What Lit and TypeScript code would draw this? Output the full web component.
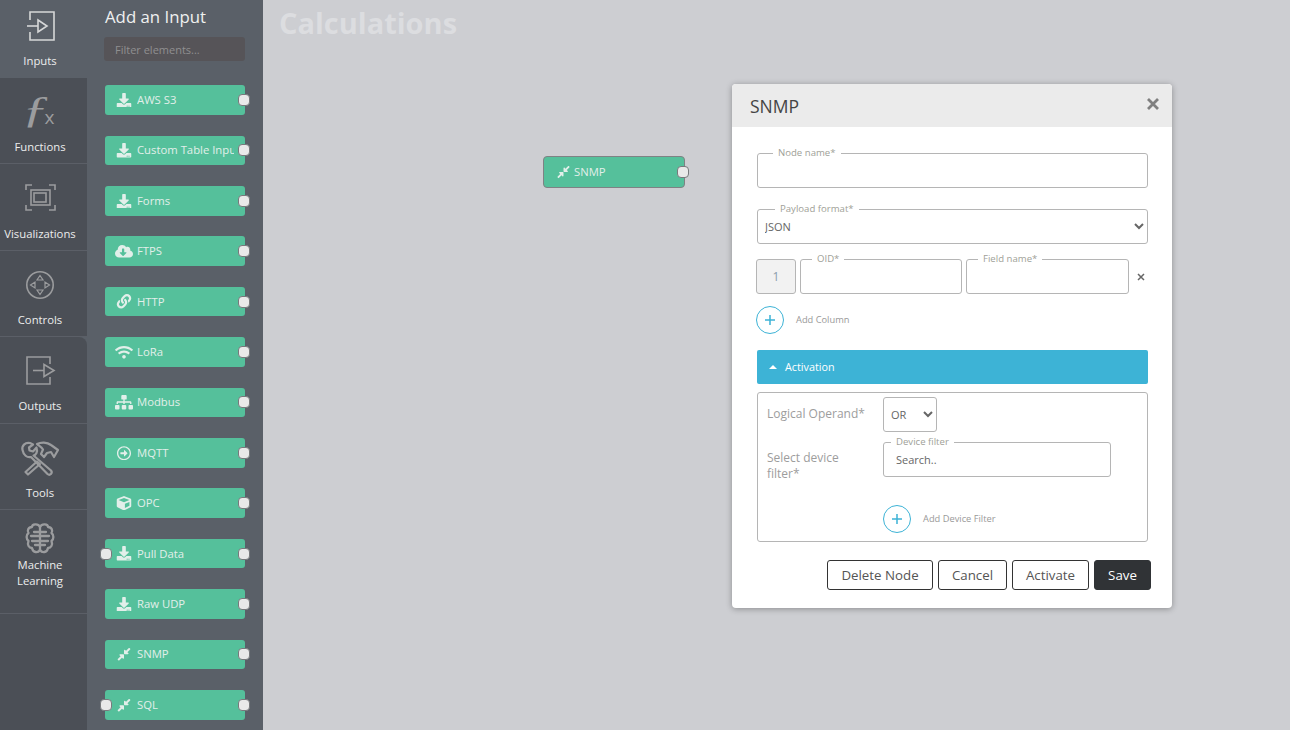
import { LitElement, html, css } from "lit";
import { customElement } from "lit/decorators.js";

const fa = (vb: string, d: string, cls = "fa") => html`<svg class=${cls} viewBox=${vb} fill="currentColor"><path d=${d}></path></svg>`;

const download = () => fa("0 0 512 512", "M216 0h80c13.3 0 24 10.7 24 24v168h87.7c17.8 0 26.7 21.5 14.1 34.1L269.7 378.3c-7.5 7.5-19.8 7.5-27.3 0L90.1 226.1c-12.6-12.6-3.7-34.1 14.1-34.1H192V24c0-13.3 10.7-24 24-24zm296 376v112c0 13.3-10.7 24-24 24H24c-13.3 0-24-10.7-24-24V376c0-13.3 10.7-24 24-24h146.7l49 49c20.1 20.1 52.5 20.1 72.6 0l49-49H488c13.3 0 24 10.7 24 24zm-124 88c0-11-9-20-20-20s-20 9-20 20 9 20 20 20 20-9 20-20zm64 0c0-11-9-20-20-20s-20 9-20 20 9 20 20 20 20-9 20-20z");
const cloud = () => fa("0 0 640 512", "M537.6 226.6c4.1-10.7 6.4-22.4 6.4-34.6 0-53-43-96-96-96-19.7 0-38.1 6-53.3 16.2C367 64.2 315.3 32 256 32c-88.4 0-160 71.6-160 160 0 2.7.1 5.4.2 8.1C40.2 219.8 0 273.2 0 336c0 79.5 64.5 144 144 144h368c70.7 0 128-57.3 128-128 0-61.9-44-113.6-102.4-125.4zm-132.9 88.7L299.3 420.7c-6.2 6.2-16.4 6.2-22.6 0L171.3 315.3c-10.1-10.1-2.9-27.3 11.3-27.3H248V176c0-8.8 7.2-16 16-16h48c8.8 0 16 7.2 16 16v112h65.4c14.2 0 21.4 17.2 11.3 27.3z");
const link = () => fa("0 0 512 512", "M326.612 185.391c59.747 59.809 58.927 155.698.36 214.59-.11.12-.24.25-.36.37l-67.2 67.2c-59.27 59.27-155.699 59.262-214.96 0-59.27-59.26-59.27-155.7 0-214.96l37.106-37.106c9.84-9.84 26.786-3.3 27.294 10.606.648 17.722 3.826 35.527 9.69 52.721 1.986 5.822.567 12.262-3.783 16.612l-13.087 13.087c-28.026 28.026-28.905 73.66-1.155 101.96 28.024 28.579 74.086 28.749 102.325.51l67.2-67.19c28.191-28.191 28.073-73.757 0-101.83-3.701-3.694-7.429-6.564-10.341-8.569a16.037 16.037 0 0 1-6.947-12.606c-.396-10.567 3.348-21.456 11.698-29.806l21.054-21.055c5.521-5.521 14.182-6.199 20.584-1.731a152.482 152.482 0 0 1 20.522 17.197zM467.547 44.449c-59.261-59.262-155.69-59.27-214.96 0l-67.2 67.2c-.12.12-.25.25-.36.37-58.566 58.892-59.387 154.781.36 214.59a152.454 152.454 0 0 0 20.521 17.196c6.402 4.468 15.064 3.789 20.584-1.731l21.054-21.055c8.35-8.35 12.094-19.239 11.698-29.806a16.037 16.037 0 0 0-6.947-12.606c-2.912-2.005-6.64-4.875-10.341-8.569-28.073-28.073-28.191-73.639 0-101.83l67.2-67.19c28.239-28.239 74.3-28.069 102.325.51 27.75 28.3 26.872 73.934-1.155 101.96l-13.087 13.087c-4.35 4.35-5.769 10.79-3.783 16.612 5.864 17.194 9.042 34.999 9.69 52.721.509 13.906 17.454 20.446 27.294 10.606l37.106-37.106c59.271-59.259 59.271-155.699.001-214.959z");
const wifi = () => fa("0 0 640 512", "M634.91 154.88C457.74-8.99 182.19-8.93 5.09 154.88c-6.66 6.16-6.79 16.59-.35 22.98l34.24 33.97c6.14 6.1 16.02 6.23 22.4.38 145.92-133.68 371.3-133.71 517.25 0 6.38 5.85 16.26 5.71 22.4-.38l34.24-33.97c6.43-6.39 6.3-16.82-.36-22.98zM320 352c-35.35 0-64 28.65-64 64s28.65 64 64 64 64-28.65 64-64-28.65-64-64-64zm202.67-83.59c-115.26-101.93-290.21-101.82-405.34 0-6.9 6.1-7.12 16.69-.57 23.15l34.44 33.99c6 5.92 15.66 6.32 22.05.8 83.95-72.57 209.74-72.41 293.49 0 6.39 5.52 16.05 5.13 22.05-.8l34.44-33.99c6.56-6.46 6.33-17.06-.56-23.15z");
const sitemap = () => fa("0 0 640 512", "M128 352H32c-17.67 0-32 14.33-32 32v96c0 17.67 14.33 32 32 32h96c17.67 0 32-14.33 32-32v-96c0-17.67-14.33-32-32-32zm-24-80h192v48h48v-48h192v48h48v-57.59c0-21.17-17.23-38.41-38.41-38.41H344v-64h40c17.67 0 32-14.33 32-32V32c0-17.67-14.33-32-32-32H256c-17.67 0-32 14.33-32 32v96c0 17.67 14.33 32 32 32h40v64H94.41C73.23 224 56 241.23 56 262.41V320h48v-48zm264 80h-96c-17.67 0-32 14.33-32 32v96c0 17.67 14.33 32 32 32h96c17.67 0 32-14.33 32-32v-96c0-17.67-14.33-32-32-32zm240 0h-96c-17.67 0-32 14.33-32 32v96c0 17.67 14.33 32 32 32h96c17.67 0 32-14.33 32-32v-96c0-17.67-14.33-32-32-32z");
const circleArrow = () => fa("0 0 512 512", "M504 256C504 119 393 8 256 8S8 119 8 256s111 248 248 248 248-111 248-248zm-448 0c0-110.5 89.5-200 200-200s200 89.5 200 200-89.5 200-200 200S56 366.5 56 256zm72 20v-40c0-6.6 5.4-12 12-12h116v-67c0-10.7 12.9-16 20.5-8.5l99 99c4.7 4.7 4.7 12.3 0 17l-99 99c-7.6 7.6-20.5 2.2-20.5-8.5v-67H140c-6.6 0-12-5.4-12-12z");
const cube = () => fa("0 0 512 512", "M239.1 6.3l-208 78c-18.7 7-31.1 25-31.1 45v225.1c0 18.2 10.3 34.8 26.5 42.9l208 104c13.5 6.8 29.4 6.8 42.9 0l208-104c16.3-8.1 26.5-24.8 26.5-42.9V129.3c0-20-12.4-37.9-31.1-44.9l-208-78C262 2.2 250 2.2 239.1 6.3zM256 68.4l192 72v1.1l-192 78-192-78v-1.1l192-72zm32 356V275.5l160-65v133.9l-160 80z");
const compress = () => fa("0 0 448 512", "M4.686 427.314L104 328l-32.922-31.029C55.958 281.851 66.666 256 88.048 256h112C213.303 256 224 266.745 224 280v112c0 21.382-25.803 32.09-40.922 16.971L152 376l-99.314 99.314c-6.248 6.248-16.379 6.248-22.627 0L4.686 449.941c-6.248-6.248-6.248-16.379 0-22.627zM443.314 84.686L344 184l32.922 31.029c15.12 15.12 4.412 40.971-16.97 40.971h-112C234.697 256 224 245.255 224 232V120c0-21.382 25.803-32.09 40.922-16.971L296 136l99.314-99.314c6.248-6.248 16.379-6.248 22.627 0l25.373 25.373c6.248 6.248 6.248 16.379 0 22.627z");

const palette = [
  { name: "AWS S3", icon: download },
  { name: "Custom Table Input", icon: download },
  { name: "Forms", icon: download },
  { name: "FTPS", icon: cloud },
  { name: "HTTP", icon: link },
  { name: "LoRa", icon: wifi },
  { name: "Modbus", icon: sitemap },
  { name: "MQTT", icon: circleArrow },
  { name: "OPC", icon: cube },
  { name: "Pull Data", icon: download, left: true },
  { name: "Raw UDP", icon: download },
  { name: "SNMP", icon: compress },
  { name: "SQL", icon: compress, left: true },
];

const navIcons = {
  inputs: html`<svg class="ni" viewBox="0 0 40 40" fill="none" stroke="currentColor" stroke-width="1.6"><path d="M10 14V6H34V34H10V26"></path><path d="M7 20H18"></path><path d="M18 14L27 20L18 26Z"></path></svg>`,
  functions: html`<svg class="ni" viewBox="0 0 40 40" fill="currentColor"><text x="-3" y="31" transform="translate(6 0) scale(1.45 1)" class="fx-f">ƒ</text><text x="24.500" y="32.500" class="fx-x">x</text></svg>`,
  vis: html`<svg class="ni" viewBox="0 0 40 40" fill="none" stroke="currentColor" stroke-width="1.6"><path d="M6 13V8H12M29 8H35V13M35 28V33H29M12 33H6V28"></path><rect x="11" y="13" width="19" height="15"></rect><rect x="14" y="16" width="12" height="9"></rect></svg>`,
  controls: html`<svg class="ni" viewBox="0 0 40 40" fill="none" stroke="currentColor" stroke-width="1.6"><circle cx="20" cy="21" r="13.2"></circle><path d="M20 11.5L23 16H17ZM20 30.5L23 26H17ZM10.5 21L15 18V24ZM29.5 21L25 18V24Z" stroke-width="1.2"></path></svg>`,
  outputs: html`<svg class="ni" viewBox="0 0 40 40" fill="none" stroke="currentColor" stroke-width="1.6"><path d="M30 14V7H7V34H30V27"></path><path d="M13 20.5H24"></path><path d="M24 14.5L34 20.5L24 26.5Z"></path></svg>`,
  tools: html`<svg class="ni" viewBox="0 0 40 40" fill="none" stroke="currentColor" stroke-width="2.2" stroke-linejoin="round"><path d="M2.5 13C1.5 9 5 5 10 6L13 7.5L9 10.5L9.5 13.5L13 14.5L16.5 10.5C18 15 16 18 13.500 18.500L31 33.500C33 36 30 39 27.500 37L11 20C7 21 3.500 18 2.500 13Z"></path><path d="M8 37.500L5.500 35L17 24.500L20 27Z"></path><path d="M17 7C21 5 27 5 31 8L38 13L34 20L31 15L27 16L24 20L21 17L23 12.500C21.500 10 19 9 17 7Z"></path></svg>`,
  ml: html`<svg class="ni" viewBox="0 0 40 40" fill="none" stroke="currentColor" stroke-width="2.3" stroke-linejoin="round" stroke-linecap="round"><path d="M20 10C18 6 12 7 12 10C8 10 7 14 8.500 16C6 18 6 22 8.500 24C7 28 9 31 12 31C13 36 18 36 20 33C22 36 27 36 28 31C31 31 33 28 31.500 24C34 22 34 18 31.500 16C33 14 32 10 28 10C28 7 22 6 20 10Z"></path><path d="M20 10V33"></path><path d="M20 15H14M11 19H20M20 19H29M26 15H20M20 24H12M28 24H20M15 28H20M25 28H20"></path></svg>`,
};

const nav = [
  { label: ["Inputs"], icon: navIcons.inputs, cls: "active" },
  { label: ["Functions"], icon: navIcons.functions, cls: "" },
  { label: ["Visualizations"], icon: navIcons.vis, cls: "" },
  { label: ["Controls"], icon: navIcons.controls, cls: "" },
  { label: ["Outputs"], icon: navIcons.outputs, cls: "round" },
  { label: ["Tools"], icon: navIcons.tools, cls: "" },
  { label: ["Machine", "Learning"], icon: navIcons.ml, cls: "ml" },
];

@customElement("app-root")
export class AppRoot extends LitElement {
  static styles = css`
    :host { display: flex; width: 1290px; height: 730px; overflow: hidden; font-family: "Open Sans", sans-serif; background: #cdced2; }
    * { box-sizing: border-box; }

    .rail { width: 87px; flex: none; display: flex; flex-direction: column; background: #5a6068; }
    .nav { height: 86.4px; padding: 13px 7px 0 0; display: flex; flex-direction: column; align-items: center; background: #4b4f56; border-bottom: 1px solid #5b5f67; color: #9b9c9e; }
    .nav.active { height: 78px; padding-top: 6px; background: #5a6068; color: #d6d7d8; border-bottom: 0; }
    .nav.round { border-top-right-radius: 8px; }
    .nav.ml { height: 103.600px; padding-top: 7px; }
    .ni { width: 40px; height: 40px; display: block; flex: none; overflow: visible; }
    .nav span { display: block; font-size: 11.300px; line-height: 16px; color: #eceded; text-align: center; margin-top: 8.200px; }
    .nav.active span { margin-top: 7px; }
    .nav.ml span { margin-top: 0; }
    .fill { flex: 1; background: #4b4f56; }
    .fx-f { font: italic 38px "Liberation Serif", serif; }
    .fx-x { font: 400 19px "Open Sans", sans-serif; }

    .panel { width: 176px; flex: none; background: #5a6068; padding: 5px 0 0 18px; overflow: hidden; }
    .panel h2 { margin: 0; font-size: 16.800px; line-height: 24px; font-weight: 400; color: #eff0f0; }
    .filter { display: block; width: 141px; height: 24px; margin: 8px 0 24.300px -1px; padding: 0 11px; border: 0; border-radius: 3px; background: #565458; font: 11px "Open Sans", sans-serif; outline: none; }
    .filter::placeholder { color: #908f90; }

    .list { display: flex; flex-direction: column; gap: 20.800px; }
    .item { position: relative; width: 140px; height: 29.600px; border-radius: 3px; background: #55c09b; color: #e2efea; display: flex; align-items: center; font-size: 11.300px; }
    .ic { width: 32px; flex: none; display: flex; justify-content: center; padding-left: 6px; }
    .ic .fa { width: 18px; height: 14.500px; display: block; }
    .txt { width: 97px; overflow: hidden; white-space: nowrap; padding-bottom: 1px; }
    .port { position: absolute; top: 50%; width: 12px; height: 12px; margin-top: -6px; border-radius: 4px; background: #e9e9e9; border: 1px solid #77797c; }
    .port.r { right: -5px; }
    .port.l { left: -5px; }

    .canvas { position: relative; flex: 1; min-width: 0; }
    .canvas h1 { margin: 0; padding: 4px 0 0 16px; font-size: 29px; line-height: 38px; font-weight: 700; color: #dcdde0; }
    .node { position: absolute; left: 280px; top: 156px; width: 142px; height: 32px; border: 1px solid #7f8284; border-radius: 4px; background: #55c09b; color: #e2efea; display: flex; align-items: center; font-size: 11.300px; }
    .node .fa { width: 13px; height: 14px; margin: 0 4px 0 13px; display: block; }
    .node span { padding-bottom: 2px; }
    .node .port { right: -5px; }

    .modal { position: absolute; left: 469px; top: 84px; width: 440px; height: 524px; background: #fff; border-radius: 4px; box-shadow: 0 1px 6px rgba(0,0,0,.32); overflow: hidden; display: flex; flex-direction: column; color: #555; }
    .head { height: 43px; flex: none; background: #ebebeb; display: flex; align-items: center; justify-content: space-between; padding: 0 12px 0 18px; }
    .head b { font-size: 17.500px; font-weight: 400; color: #444; }
    .close { width: 14px; height: 14px; margin-top: -4px; display: block; color: #7f7f7f; }
    .body { padding: 26px 24px 0 25px; display: flex; flex-direction: column; }

    .field { position: relative; height: 35px; border: 1px solid #b5b5b5; border-radius: 3px; background: #fff; }
    .field label { position: absolute; top: -8px; background: #fff; padding: 0 5px; font-size: 9.600px; line-height: 13px; color: #a09f98; white-space: nowrap; }
    .field input { width: 100%; height: 100%; border: 0; padding: 0 12px; background: transparent; outline: none; font: 11px "Open Sans", sans-serif; border-radius: 3px; }
    .field input::placeholder { color: #666; }
    .field select, .op { width: 100%; height: 100%; border: 0; background: transparent; font: 11px "Open Sans", sans-serif; color: #666; outline: none; padding-left: 3px; }
    .l15 label { left: 15px; }
    .l17 label { left: 17px; }
    .l11 label { left: 11px; }
    .l7 label { left: 7px; }
    .mt21 { margin-top: 21px; }

    .cols { display: flex; gap: 4px; margin: 15px 0 0 -1px; align-items: center; }
    .idx { width: 40px; height: 35px; border: 1px solid #b5b5b5; border-radius: 3px; background: #f2f2f2; color: #8b9cad; font-size: 12px; display: flex; align-items: center; justify-content: center; }
    .oid { width: 162px; }
    .fname { width: 163px; }
    .rm { width: 8px; height: 8px; margin-left: 4px; color: #666; display: block; }

    .add { display: flex; align-items: center; gap: 12px; font-size: 9.300px; color: #999; height: 28px; }
    .add span { padding-bottom: 2px; }
    .add.top { margin: 12px 0 0 -1px; }
    .circle { width: 28px; height: 28px; flex: none; border-radius: 50%; border: 1px solid #3db3d6; display: flex; align-items: center; justify-content: center; color: #3db3d6; }
    .circle svg { width: 12px; height: 12px; display: block; }

    .bar { height: 34px; margin-top: 16px; background: #3db3d6; border-radius: 2px; color: #fff; display: flex; align-items: center; font-size: 10.800px; font-weight: 500; padding-left: 12px; }
    .bar span { padding-bottom: 2px; }
    .tri { width: 0; height: 0; border: 4px solid transparent; border-top: 0; border-bottom: 4px solid #fff; margin-right: 8px; }
    .act { margin-top: 8px; height: 150px; border: 1px solid #b5b5b5; border-radius: 3px; padding: 4px 0 0 9px; display: grid; grid-template-columns: 116px 228px; grid-auto-rows: min-content; row-gap: 10px; }
    .act .lab { font-size: 12px; line-height: 16px; color: #9d9d9d; }
    .lab.a { padding-top: 9px; }
    .lab.b { padding-top: 8px; width: 90px; }
    .sel { width: 54px; height: 35px; border: 1px solid #b5b5b5; border-radius: 3px; }
    .add.in { grid-column: 2; margin-top: 13px; }

    .foot { display: flex; justify-content: flex-end; gap: 5px; margin: 18px -3px 0 0; }
    .foot button { height: 30px; padding: 0 10px; border: 1px solid #333; border-radius: 3px; background: #fff; color: #555; font: 13.300px "Open Sans", sans-serif; }
    .foot button.d { width: 106px; }
    .foot button.c { width: 69px; }
    .foot button.v { width: 77px; }
    .foot button.s { width: 57px; background: #303336; border-color: #303336; color: #fff; }
  `;

  private plus() {
    return html`<div class="circle"><svg viewBox="0 0 12 12" fill="none" stroke="currentColor" stroke-width="1.500"><path d="M6 1V11M1 6H11"></path></svg></div>`;
  }

  render() {
    return html`
      <nav class="rail">
        ${nav.map((n) => html`<div class="nav ${n.cls}">${n.icon}${n.label.map((l) => html`<span>${l}</span>`)}</div>`)}
        <div class="fill"></div>
      </nav>
      <aside class="panel">
        <h2>Add an Input</h2>
        <input class="filter" placeholder="Filter elements..." />
        <div class="list">
          ${palette.map((p) => html`
            <div class="item">
              ${p.left ? html`<i class="port l"></i>` : ""}
              <div class="ic">${p.icon()}</div>
              <div class="txt">${p.name}</div>
              <i class="port r"></i>
            </div>`)}
        </div>
      </aside>
      <main class="canvas">
        <h1>Calculations</h1>
        <div class="node">${compress()}<span>SNMP</span><i class="port"></i></div>
        <section class="modal">
          <header class="head">
            <b>SNMP</b>
            <svg class="close" viewBox="0 0 14 14" fill="none" stroke="currentColor" stroke-width="2.800"><path d="M2 2L12 12M12 2L2 12"></path></svg>
          </header>
          <div class="body">
            <div class="field l15"><label>Node name*</label><input /></div>
            <div class="field l17 mt21"><label>Payload format*</label><select><option>JSON</option></select></div>
            <div class="cols">
              <div class="idx">1</div>
              <div class="field oid l11"><label>OID*</label><input /></div>
              <div class="field fname l11"><label>Field name*</label><input /></div>
              <svg class="rm" viewBox="0 0 8 8" fill="none" stroke="currentColor" stroke-width="1.500"><path d="M1 1L7 7M7 1L1 7"></path></svg>
            </div>
            <div class="add top">${this.plus()}<span>Add Column</span></div>
            <div class="bar"><i class="tri"></i><span>Activation</span></div>
            <div class="act">
              <div class="lab a">Logical Operand*</div>
              <div class="sel"><select class="op"><option>OR</option></select></div>
              <div class="lab b">Select device filter*</div>
              <div class="field l7"><label>Device filter</label><input placeholder="Search.." /></div>
              <div class="add in">${this.plus()}<span>Add Device Filter</span></div>
            </div>
            <div class="foot">
              <button class="d">Delete Node</button>
              <button class="c">Cancel</button>
              <button class="v">Activate</button>
              <button class="s">Save</button>
            </div>
          </div>
        </section>
      </main>
    `;
  }
}
